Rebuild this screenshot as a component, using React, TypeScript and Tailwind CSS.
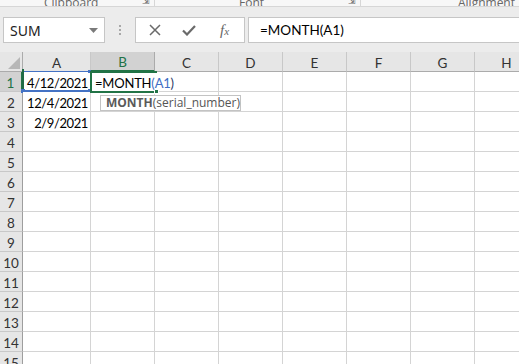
import React from "react";

const cols = ["A", "B", "C", "D", "E", "F", "G", "H"];
const rows = Array.from({ length: 15 }, (_, i) => i + 1);

const cellFont = { fontFamily: "Lato, 'Liberation Sans', sans-serif" };

function Cell({ r, c }: { r: number; c: string }) {
  const base =
    "relative border-r border-b border-[#d4d4d4] bg-white text-[13px] tracking-[-0.4px] leading-[22px] text-black";
  if (r === 1 && c === "A") {
    return (
      <div className={base + " bg-[#eaf1fb]"}>
        <div className="absolute inset-[-1px] border border-[#4472c4] border-b-2 pointer-events-none" />
        <div className="absolute left-[-1px] top-[-3px] bottom-[-1px] w-[2px] bg-[#1f6a46]" />
        <div className="absolute right-[-1px] top-[-2px] w-[3px] h-[3px] bg-[#4472c4]" />
        <div className="absolute left-[-2px] bottom-[-2px] w-[4px] h-[4px] bg-[#4472c4]" />
        <div className="absolute right-[-2px] bottom-[-2px] w-[4px] h-[4px] bg-[#4472c4]" />
        <div className="relative text-right pr-[2px] h-[19px]">4/12/2021</div>
      </div>
    );
  }
  if (r === 1 && c === "B") {
    return (
      <div className="relative border-b border-[#d4d4d4] bg-white text-[13px] tracking-[-0.2px] leading-[22px] text-black z-10">
        <div className="absolute left-[-1px] top-[-1px] w-[67px] h-[22px] border-2 border-r-0 border-[#217346] pointer-events-none" />
        <div className="absolute right-[-4px] bottom-[-3px] w-[5px] h-[5px] bg-[#217346] border border-white" />
        <div className="relative whitespace-nowrap pl-[4px] flex items-center h-[19px] pt-[2px]">
          <span>=MONTH</span>
          <span className="inline-block w-[1px] h-[16px] bg-black" />
          <span className="text-[#3e6ec4]">(A1</span>
          <span className="text-[#2b3a66]">)</span>
        </div>
        <div
          className="absolute left-[9px] top-[23px] h-[16px] w-[141px] border border-[#c3c3c3] bg-white flex items-center pl-[5px] text-[12px] leading-[14px] tracking-normal text-[#555] whitespace-nowrap"
          style={{ fontFamily: "'Open Sans', 'Noto Sans', sans-serif" }}
        >
          <span className="font-bold text-[#5a5a5a]">MONTH</span>
          <span>(serial_number)</span>
        </div>
      </div>
    );
  }
  let text = "";
  if (c === "A" && r === 2) text = "12/4/2021";
  if (c === "A" && r === 3) text = "2/9/2021";
  return (
    <div className={base}>
      {text && <div className="text-right pr-[2px] h-[19px]">{text}</div>}
    </div>
  );
}

export default function App() {
  return (
    <div className="w-[519px] h-[364px] overflow-hidden bg-[#e9e9e9] relative" style={cellFont}>
      {/* ribbon bottom strip */}
      <div
        className="h-[6px] bg-[#f7f7f7] border-b border-[#d6d6d6] flex items-end overflow-hidden text-[12px] text-[#666] relative box-content"
        style={{ fontFamily: "'Open Sans', 'Noto Sans', sans-serif" }}
      >
        <div className="w-[155px] flex items-end leading-[14px] border-r border-[#d6d6d6] h-full">
          <span className="ml-[44px] translate-y-[4px]">Clipboard</span>
          <span className="ml-auto mr-[4px] text-[9px] translate-y-[2px]">⇲</span>
        </div>
        <div className="w-[206px] flex items-end leading-[14px] border-r border-[#d6d6d6] h-full">
          <span className="ml-[84px] translate-y-[4px]">Font</span>
          <span className="ml-auto mr-[4px] text-[9px] translate-y-[2px]">⇲</span>
        </div>
        <div className="flex-1 flex items-end leading-[14px] h-full">
          <span className="ml-[97px] translate-y-[4px]">Alignment</span>
        </div>
      </div>

      {/* formula toolbar */}
      <div className="h-[45px] flex items-start pt-[10px] bg-[#ececec]">
        <div
          className="ml-[3px] w-[102px] h-[26px] border border-[#c6c6c6] bg-white flex items-center pl-[6px] text-[14px] text-[#222]"
          style={{ fontFamily: "'Noto Sans', 'Open Sans', sans-serif" }}
        >
          <span>SUM</span>
          <svg className="ml-auto mr-[6px]" width="9" height="5" viewBox="0 0 9 5">
            <path d="M0 0 H9 L4.5 5 Z" fill="#7a7a7a" />
          </svg>
        </div>
        <div className="w-[30px] h-[26px] flex flex-col items-center justify-center gap-[2px]">
          <span className="w-[2px] h-[2px] bg-[#a8a8a8]" />
          <span className="w-[2px] h-[2px] bg-[#a8a8a8]" />
          <span className="w-[2px] h-[2px] bg-[#a8a8a8]" />
        </div>
        <div className="w-[110px] h-[26px] border border-[#c6c6c6] bg-white flex items-center">
          <svg className="ml-[13px]" width="12" height="12" viewBox="0 0 12 12">
            <path d="M1 1 L11 11 M11 1 L1 11" stroke="#6a6a6a" strokeWidth="1.5" />
          </svg>
          <svg className="ml-[21px]" width="14" height="11" viewBox="0 0 14 11">
            <path d="M1 5.5 L5 9.5 L13 1" stroke="#6a6a6a" strokeWidth="2.2" fill="none" />
          </svg>
          <span
            className="ml-[24px] italic text-[15px] text-[#666] leading-none"
            style={{ fontFamily: "'Liberation Serif', 'DejaVu Serif', serif" }}
          >
            f<span className="text-[11px]">x</span>
          </span>
        </div>
        <div className="ml-[3px] flex-1 h-[26px] border-y border-l border-[#c6c6c6] bg-white flex items-center pl-[11px] text-[13.5px] text-black">
          =MONTH(A1)
        </div>
      </div>

      {/* grid */}
      <div className="grid grid-cols-[23px_68px_64px_64px_64px_64px_64px_64px_64px] grid-rows-[20px_repeat(15,20px)] w-[539px]">
        <div className="relative bg-[#e6e6e6] border-r border-b border-[#ababab]">
          <svg className="absolute right-[2px] bottom-[2px]" width="12" height="12" viewBox="0 0 12 12">
            <path d="M12 0 V12 H0 Z" fill="#b7b7b7" />
          </svg>
        </div>
        {cols.map((c) => (
          <div
            key={c}
            className={
              c === "B"
                ? "bg-[#d2d2d2] border-r border-[#ababab] border-b-2 border-b-[#217346] text-[#217346] flex items-center justify-center pt-[2px] text-[13.5px]"
                : "bg-[#e6e6e6] border-r border-[#c8c8c8] border-b border-b-[#ababab] text-[#333] flex items-center justify-center pt-[3px] text-[13.5px]"
            }
          >
            {c}
          </div>
        ))}
        {rows.map((r) => (
          <React.Fragment key={r}>
            <div
              className={
                r === 1
                  ? "bg-[#d2d2d2] border-b border-[#c8c8c8] border-r-2 border-r-[#217346] text-[#217346] flex items-center justify-center pt-[3px] text-[13.5px]"
                  : "bg-[#e6e6e6] border-b border-[#c8c8c8] border-r border-r-[#9e9e9e] text-[#333] flex items-center justify-center pt-[3px] text-[13.5px]"
              }
            >
              {r}
            </div>
            {cols.map((c) => (
              <Cell key={c} r={r} c={c} />
            ))}
          </React.Fragment>
        ))}
      </div>
    </div>
  );
}
